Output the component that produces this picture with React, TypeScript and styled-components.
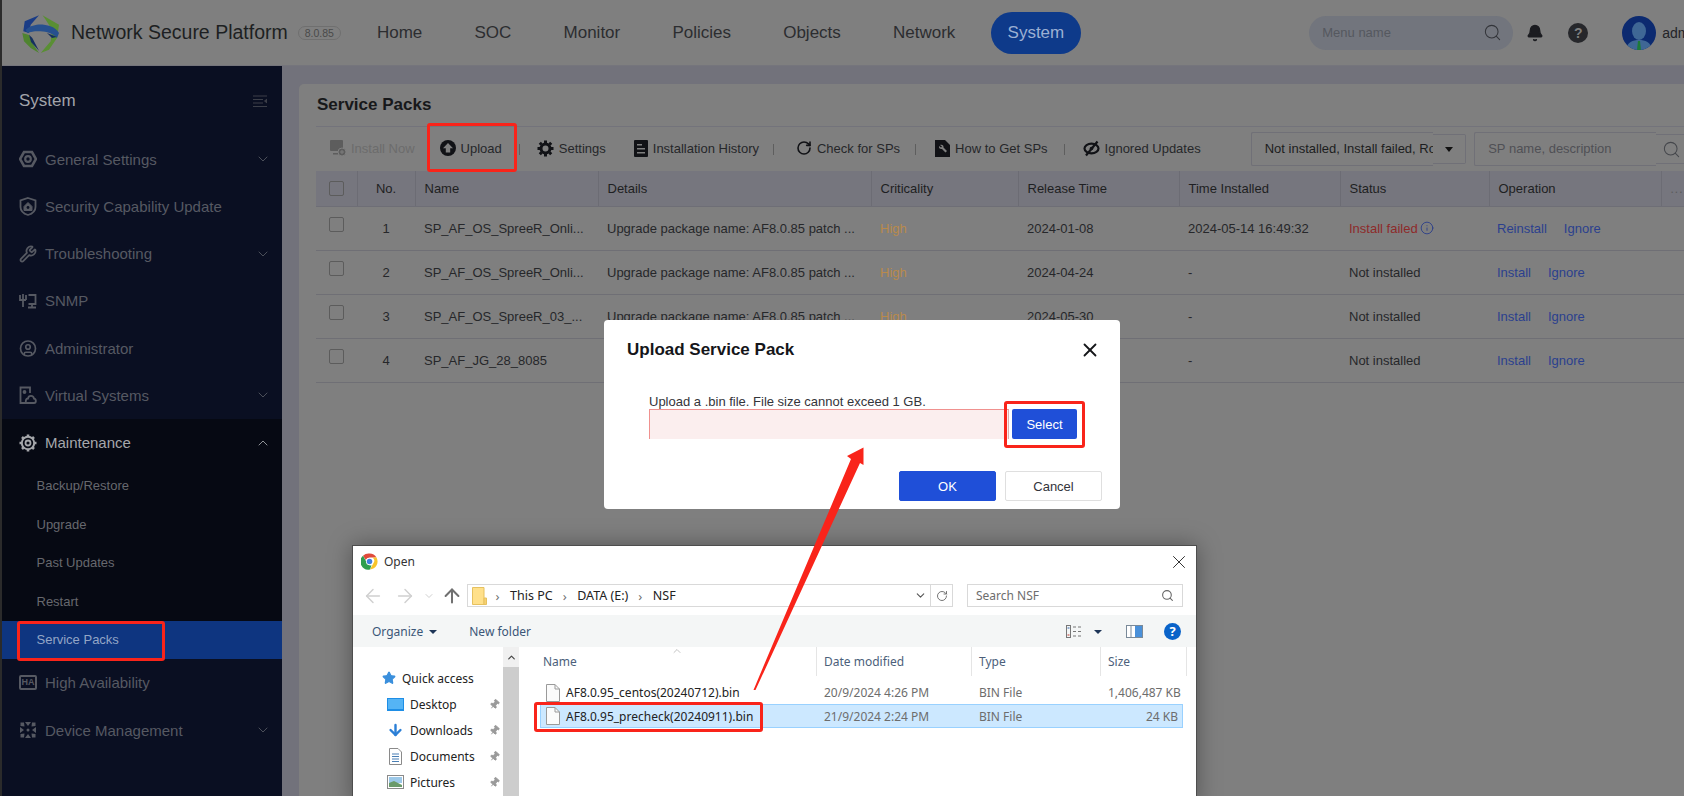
import React from "react";
import styled, { createGlobalStyle } from "styled-components";
import {
  ArrowDown,
  ArrowLeft,
  ArrowRight,
  ArrowUp,
  Bell,
  ChevronDown,
  ChevronUp,
  Info,
  Pin,
  RotateCw,
  Search,
  Star,
  UserCircle,
  Wrench,
  X,
} from "lucide-react";

const GlobalStyle = createGlobalStyle`
  html, body { margin: 0; padding: 0; background: #7f7f7f; }
  body { font-family: "Liberation Sans", Arial, sans-serif; overflow: hidden; }
  * { box-sizing: border-box; }
`;

const Page = styled.div`
  position: relative;
  width: 1684px;
  height: 796px;
  overflow: hidden;
  padding-left: 2px;
  background: #2b2b2b;
  display: flex;
  flex-direction: column;
`;

const Header = styled.header`
  height: 66px;
  flex: none;
  background: #7f7f7f;
  display: flex;
  align-items: center;
  padding-left: 19px;
  border-bottom: 1px solid #75757c;
`;

const Brand = styled.span`
  margin-left: 10px;
  font-size: 19.5px;
  color: #1d1f22;
  white-space: nowrap;
`;

const Version = styled.span`
  margin-left: 10px;
  height: 14px;
  padding: 0 6px;
  border: 1px solid #6f6f6f;
  border-radius: 7px;
  font-size: 10.5px;
  line-height: 12px;
  color: #4a4a4a;
`;

const Nav = styled.nav`
  margin-left: 19px;
  display: flex;
  gap: 18.2px;
`;

const NavItem = styled.a<{ $active?: boolean }>`
  height: 42px;
  padding: 0 17px;
  border-radius: 21px;
  font-size: 17px;
  line-height: 42px;
  background: ${(p) => (p.$active ? "#0e3a8a" : "transparent")};
  color: ${(p) => (p.$active ? "#9cb0d3" : "#2c2d30")};
`;

const HeaderRight = styled.div`
  margin-left: 228px;
  display: flex;
  align-items: center;
`;

const MenuSearch = styled.div`
  width: 204px;
  height: 34px;
  border-radius: 17px;
  padding: 0 11px 0 13px;
  background: #72757d;
  display: flex;
  align-items: center;
  justify-content: space-between;
  font-size: 13px;
  color: #55585f;
`;

const HeadIcon = styled.span<{ $gap: number }>`
  margin-left: ${(p) => p.$gap}px;
  display: flex;
  color: #1b1c20;
`;

const HelpDot = styled.span`
  margin-left: 24px;
  width: 20px;
  height: 20px;
  border-radius: 50%;
  background: #26272b;
  color: #7f7f7f;
  font-size: 14px;
  font-weight: 700;
  line-height: 20px;
  text-align: center;
`;

const UserName = styled.span`
  margin-left: 6px;
  font-size: 14px;
  color: #232428;
`;

const Body = styled.div`
  flex: 1;
  min-height: 0;
  display: flex;
`;

const Sidebar = styled.aside`
  width: 280px;
  flex: none;
  background: #0a0f22;
  display: flex;
  flex-direction: column;
`;

const SideTitle = styled.div`
  height: 69.5px;
  flex: none;
  padding: 0 15px 0 17px;
  display: flex;
  align-items: center;
  justify-content: space-between;
  font-size: 17px;
  color: #a2a4ab;
`;

const MenuRow = styled.div<{ $open?: boolean }>`
  height: 47.25px;
  flex: none;
  padding: 0 11px 0 17px;
  display: flex;
  align-items: center;
  font-size: 15px;
  color: ${(p) => (p.$open ? "#a5a7ab" : "#565962")};
`;

const MenuIcon = styled.span`
  width: 18px;
  height: 18px;
  flex: none;
  margin-right: 8px;
  display: flex;
  align-items: center;
  justify-content: center;
`;

const HaBadge = styled.span`
  width: 18px;
  height: 15px;
  border: 2px solid currentColor;
  border-radius: 2px;
  font-size: 9px;
  font-weight: 700;
  line-height: 11px;
  text-align: center;
`;

const MenuLabel = styled.span`
  flex: 1;
  white-space: nowrap;
`;

const Group = styled.div`
  background: #060913;
  flex: none;
`;

const SubRow = styled.div<{ $active?: boolean }>`
  height: 38.6px;
  padding-left: 34.5px;
  display: flex;
  align-items: center;
  font-size: 13px;
  background: ${(p) => (p.$active ? "#0e3580" : "transparent")};
  color: ${(p) => (p.$active ? "#93a5c6" : "#66686e")};
`;

const Main = styled.main`
  flex: 1;
  min-width: 0;
  background: #72727b;
  padding: 18px 0 0 17px;
  overflow: hidden;
`;

const Card = styled.section`
  width: 1420px;
  height: 100%;
  background: #7f7f7f;
  border-radius: 5px 0 0 0;
  padding: 0 17px;
`;

const CardTitle = styled.h2`
  margin: 0;
  height: 43px;
  padding: 1px 0 0 1px;
  font-size: 17px;
  line-height: 40px;
  font-weight: 700;
  color: #17181a;
  border-bottom: 1px solid #73737b;
`;

const Toolbar = styled.div`
  height: 44px;
  padding-left: 14px;
  display: flex;
  align-items: center;
  font-size: 13px;
  color: #26272a;
  & > * {
    flex: none;
  }
`;

const ToolItem = styled.span<{ $after?: number; $muted?: boolean }>`
  display: flex;
  align-items: center;
  gap: 5px;
  white-space: nowrap;
  margin-bottom: 2px;
  margin-right: ${(p) => p.$after ?? 18}px;
  color: ${(p) => (p.$muted ? "#6c6c6c" : "#26272a")};
`;

const ToolSep = styled.span<{ $after: number }>`
  width: 1px;
  height: 11px;
  margin-right: ${(p) => p.$after}px;
  background: #5e5e5e;
`;

const FilterWrap = styled.div`
  margin-left: 50px;
  display: flex;
  align-items: center;
`;

const FilterText = styled.div`
  width: 182px;
  height: 34px;
  padding-left: 13px;
  border: 1px solid #707077;
  border-right: 0;
  border-radius: 2px 0 0 2px;
  font-size: 13px;
  line-height: 32px;
  color: #1c1d20;
  white-space: nowrap;
  overflow: hidden;
`;

const FilterCaret = styled.div`
  width: 33px;
  height: 30px;
  border: 1px solid #707077;
  border-left: 0;
  border-radius: 0 2px 2px 0;
  display: flex;
  align-items: center;
  justify-content: center;
  &::after {
    content: "";
    border: 4px solid transparent;
    border-top: 5px solid #111;
    margin-top: 4px;
  }
`;

const SpSearch = styled.div`
  margin-left: 8.5px;
  display: flex;
  align-items: center;
`;

const SpInput = styled.div`
  width: 182px;
  height: 34px;
  padding-left: 13px;
  border: 1px solid #707077;
  border-right: 0;
  border-radius: 2px 0 0 2px;
  font-size: 13px;
  line-height: 32px;
  color: #4f5055;
`;

const SpIcon = styled.div`
  width: 60px;
  height: 30px;
  padding-left: 6px;
  border-top: 1px solid #707077;
  border-bottom: 1px solid #707077;
  display: flex;
  align-items: center;
  color: #45474c;
`;

const Table = styled.table`
  width: 1368px;
  table-layout: fixed;
  border-collapse: collapse;
  font-size: 13px;
  color: #26272a;
`;

const HeadCell = styled.th<{ $center?: boolean }>`
  height: 35px;
  padding: 0 9px;
  background: #76767e;
  border-right: 1px solid #6c6c74;
  border-bottom: 1px solid #6e6e76;
  font-weight: 400;
  text-align: ${(p) => (p.$center ? "center" : "left")};
  color: #1e1f22;
`;

const Cell = styled.td<{ $center?: boolean; $tone?: string }>`
  height: 44px;
  padding: 0 9px;
  border-bottom: 1px solid #6f6f75;
  text-align: ${(p) => (p.$center ? "center" : "left")};
  color: ${(p) => p.$tone ?? "#26272a"};
  white-space: nowrap;
  overflow: hidden;
`;

const Check = styled.span<{ $row?: boolean }>`
  display: block;
  width: 15px;
  height: 15px;
  margin: ${(p) => (p.$row ? "-7px 0 0 4px" : "0 0 0 4px")};
  border: 1px solid #5c5c5c;
  border-radius: 2px;
`;

const LinkText = styled.a`
  color: #2b3f8e;
  margin-right: 17px;
  &:first-child {
    margin-left: -1px;
  }
`;

const FailIcon = styled.span`
  margin-left: 2px;
  color: #24398a;
  vertical-align: -2px;
  display: inline-flex;
`;

const MoreDots = styled.span`
  letter-spacing: 1px;
  color: #5a5a5a;
  font-size: 12px;
`;

const Modal = styled.div`
  position: absolute;
  left: 604px;
  top: 320px;
  width: 516px;
  height: 189px;
  padding: 0 23px;
  background: #fff;
  border-radius: 4px;
`;

const ModalHead = styled.div`
  height: 53px;
  padding-top: 6px;
  display: flex;
  align-items: center;
  justify-content: space-between;
  font-size: 17px;
  font-weight: 700;
  color: #15161a;
`;

const CloseBtn = styled.span`
  display: flex;
  margin-right: -4px;
  color: #15161a;
`;

const ModalBody = styled.div`
  margin: 21px 0 0 22px;
  font-size: 13px;
  color: #34353a;
`;

const HintLine = styled.div`
  line-height: 15px;
  height: 15px;
`;

const UploadRow = styled.div`
  display: flex;
  margin-top: 0;
`;

const UploadField = styled.div`
  width: 360px;
  height: 30px;
  background: #fbeeee;
  border-top: 1px solid #f0918f;
  border-left: 1px solid #f0918f;
  border-right: 1px solid #d9b0ae;
`;

const SmallBlue = styled.button`
  margin-left: 3px;
  width: 65px;
  height: 30px;
  border: 0;
  border-radius: 2px;
  background: #1f4fd8;
  color: #fff;
  font: 13px "Liberation Sans", Arial, sans-serif;
`;

const ModalFoot = styled.div`
  margin-top: 32px;
  display: flex;
  justify-content: flex-end;
  gap: 9px;
  margin-right: -5px;
`;

const FootBtn = styled.button<{ $primary?: boolean }>`
  width: 97px;
  height: 30px;
  border-radius: 2px;
  border: 1px solid ${(p) => (p.$primary ? "#1f4fd8" : "#dfdfdf")};
  background: ${(p) => (p.$primary ? "#1f4fd8" : "#fff")};
  color: ${(p) => (p.$primary ? "#fff" : "#33343a")};
  font: 13px "Liberation Sans", Arial, sans-serif;
`;

const Explorer = styled.div`
  position: absolute;
  left: 352px;
  top: 545px;
  width: 845px;
  height: 260px;
  background: #fff;
  border: 1px solid #4d4d4d;
  box-shadow: 0 0 22px rgba(0, 0, 0, 0.35);
  font-family: "Noto Sans", "Open Sans", sans-serif;
  font-size: 12px;
  color: #222;
`;

const ExTitle = styled.div`
  height: 31px;
  padding: 0 6px 0 8px;
  display: flex;
  align-items: center;
  gap: 6px;
`;

const ExTitleText = styled.span`
  flex: 1;
  color: #333;
`;

const ExAddressRow = styled.div`
  height: 38px;
  padding: 7px 13px 0 4px;
  display: flex;
  align-items: flex-start;
`;

const ExNavBtn = styled.span<{ $w: number; $tone: string }>`
  width: ${(p) => p.$w}px;
  height: 23px;
  display: flex;
  align-items: center;
  justify-content: center;
  color: ${(p) => p.$tone};
`;

const AddressBox = styled.div`
  width: 486px;
  height: 23px;
  border: 1px solid #d9d9d9;
  display: flex;
  align-items: center;
  padding-left: 4px;
`;

const Crumb = styled.span`
  margin-left: 10.5px;
  font-size: 12.5px;
  color: #222;
`;

const CrumbGt = styled.span`
  margin-left: 10px;
  color: #707070;
  font-size: 13px;
  display: flex;
  svg + & {
    margin-left: 8.5px;
  }
`;

const AddressTail = styled.div`
  margin-left: auto;
  display: flex;
  align-items: center;
  height: 100%;
`;

const RefreshBtn = styled.span`
  width: 22px;
  height: 100%;
  margin-left: 3px;
  border-left: 1px solid #d9d9d9;
  display: flex;
  align-items: center;
  justify-content: center;
  color: #666;
`;

const ExSearch = styled.div`
  margin-left: 14px;
  width: 216px;
  height: 23px;
  border: 1px solid #d9d9d9;
  padding: 0 8px;
  display: flex;
  align-items: center;
  justify-content: space-between;
  color: #6d6d6d;
`;

const ExToolbar = styled.div`
  height: 32px;
  padding: 0 15px 0 19px;
  background: #f4f6f6;
  display: flex;
  align-items: center;
  color: #3b5678;
`;

const ExToolText = styled.span`
  white-space: nowrap;
`;

const DownCaret = styled.span<{ $before?: number; $after?: number }>`
  margin: 2px ${(p) => p.$after ?? 32}px 0 ${(p) => p.$before ?? 6}px;
  border: 4px solid transparent;
  border-top: 4px solid #1d3557;
  border-bottom: 0;
`;

const ExSpacer = styled.span`
  flex: 1;
`;

const ExToolIcon = styled.span<{ $after?: number }>`
  display: flex;
  margin-right: ${(p) => p.$after ?? 0}px;
`;

const ExHelp = styled.span`
  width: 17px;
  height: 17px;
  border-radius: 50%;
  background: #0a63c9;
  color: #fff;
  font-size: 13px;
  font-weight: 700;
  line-height: 17px;
  text-align: center;
`;

const ExPanes = styled.div`
  display: flex;
  height: 160px;
`;

const ExTree = styled.div`
  width: 150px;
  flex: none;
  padding: 18px 0 0 29px;
`;

const TreeRow = styled.div<{ $top?: boolean }>`
  height: 26px;
  display: flex;
  align-items: center;
  margin-left: ${(p) => (p.$top ? "0" : "5px")};
  gap: 6px;
`;

const TreeIcon = styled.span`
  width: 17px;
  height: 17px;
  flex: none;
  display: flex;
  align-items: center;
  justify-content: center;
`;

const TreeLabel = styled.span`
  flex: 1;
`;

const TreePin = styled.span`
  display: flex;
  margin-right: 3px;
  color: #9a9a9a;
  transform: rotate(40deg);
`;

const ExScroll = styled.div`
  width: 16px;
  flex: none;
  background: #f0f0f0;
  padding-top: 5px;
  display: flex;
  flex-direction: column;
  align-items: center;
  color: #444;
`;

const ExThumb = styled.div`
  margin-top: 4px;
  width: 16px;
  flex: 1;
  background: #cdcdcd;
`;

const ExList = styled.div`
  flex: 1;
  min-width: 0;
  position: relative;
  padding-left: 21px;
`;

const SortMark = styled.span`
  position: absolute;
  left: 152px;
  top: -2px;
  display: flex;
  color: #9a9a9a;
`;

const ExHeadRow = styled.div`
  height: 28px;
  display: grid;
  grid-template-columns: 277px 155px 129px 86px;
  color: #4c5f7b;
`;

const ExHeadCell = styled.span`
  padding-left: 7px;
  line-height: 29px;
  border-right: 1px solid #e5e5e5;
  &:first-child {
    padding-left: 3px;
  }
`;

const ExFileRow = styled.div<{ $selected?: boolean }>`
  margin-top: ${(p) => (p.$selected ? "0" : "6px")};
  width: 643px;
  height: ${(p) => (p.$selected ? "24px" : "23px")};
  display: grid;
  grid-template-columns: 276px 155px 129px 1fr;
  align-items: center;
  border: 1px solid ${(p) => (p.$selected ? "#99d1ff" : "transparent")};
  background: ${(p) => (p.$selected ? "#cce8ff" : "transparent")};
`;

const FileName = styled.span`
  display: flex;
  align-items: center;
  gap: 6px;
  padding-left: 5px;
  color: #222;
  white-space: nowrap;
`;

const FileMeta = styled.span<{ $right?: boolean }>`
  padding-left: 7px;
  padding-right: 4px;
  color: #6d6d6d;
  text-align: ${(p) => (p.$right ? "right" : "left")};
  white-space: nowrap;
`;

const RedBox = styled.div<{ $x: number; $y: number; $w: number; $h: number }>`
  position: absolute;
  left: ${(p) => p.$x}px;
  top: ${(p) => p.$y}px;
  width: ${(p) => p.$w}px;
  height: ${(p) => p.$h}px;
  border: 3px solid #f9241a;
  border-radius: 3px;
  pointer-events: none;
`;

const ArrowLayer = styled.svg`
  position: absolute;
  left: 0;
  top: 0;
  pointer-events: none;
`;

const Logo = () => (
  <svg width="40" height="40" viewBox="0 0 40 40" style={{ flex: "none" }}>
    <path d="M21.500 2.300 38 11.700 36 25 28 36.700 19.700 40 29.700 28.300 31 16.700 24.700 6.700Z" fill="#5a8f34" />
    <path d="M1.300 20 3 28.300 9.700 35 18 40 11.300 30 8 22Z" fill="#4f8430" />
    <path d="M18 2.300 3.700 8.300 2.300 18.300 8 20 9.700 11.700Z" fill="#1a3c86" />
    <path d="M4.700 16.700C10 12 17 11 23 11.700 30 12.500 35 15 38 20L36 25C32 21 28 19 22 18.500 17 18 11 18 6.300 20Z" fill="#27508e" />
    <path d="M8 21.700 11.300 25 18 37.700 10 29Z" fill="#14305f" />
    <path d="M26 20 36 24 31 25Z" fill="#14305f" />
  </svg>
);

const Avatar = () => (
  <svg width="34" height="34" viewBox="0 0 34 34">
    <defs>
      <clipPath id="av">
        <circle cx="17" cy="17" r="17" />
      </clipPath>
    </defs>
    <g clipPath="url(#av)">
      <rect width="34" height="34" fill="#0c2a70" />
      <path d="M4 34C5 26 11 24 17 24 23 24 29 26 30 34Z" fill="#3f6795" />
      <ellipse cx="17" cy="15" rx="7" ry="9" fill="#3f6795" />
      <path d="M16 25H18L19 34H15Z" fill="#1d7a3a" />
    </g>
  </svg>
);

const HexIcon = () => (
  <svg width="18" height="18" viewBox="0 0 18 18" fill="none" stroke="currentColor" strokeWidth="2.6">
    <path d="M5 2H13L17 9 13 16H5L1 9Z" />
    <circle cx="9" cy="9" r="2.800" strokeWidth="2.200" />
  </svg>
);

const ShieldIcon = () => (
  <svg width="18" height="19" viewBox="0 0 18 19" fill="none" stroke="currentColor" strokeWidth="1.800">
    <path d="M9 1 16.500 3.500V10C16.500 14 13 16.800 9 18 5 16.800 1.500 14 1.500 10V3.500Z" />
    <path d="M9 5.500 13 9.500V13.500H5V9.500Z" fill="currentColor" strokeWidth="1" />
    <circle cx="9" cy="10.500" r="1.400" fill="#0a0f22" stroke="none" />
  </svg>
);

const SnmpIcon = () => (
  <svg width="18" height="16" viewBox="0 0 18 16" fill="none" stroke="currentColor" strokeWidth="1.800">
    <path d="M1 2V7H7M4 1V14M7 2V7" />
    <path d="M9.500 2H16.500V11H9.500M13 11V14.500M9 14.500H17" />
  </svg>
);

const VirtualIcon = () => (
  <svg width="18" height="18" viewBox="0 0 18 18" fill="none" stroke="currentColor" strokeWidth="1.800">
    <path d="M8 17H1.500V1.500H11V7" />
    <path d="M8 17H15C17.500 17 17.500 13 15 12.700 14.500 9 9.500 9 9 12.500 6.500 12.500 6 17 8 17Z" />
    <circle cx="5.500" cy="6" r="1" fill="currentColor" />
  </svg>
);

const GearIcon = () => (
  <svg width="18" height="18" viewBox="0 0 18 18" fill="none" stroke="currentColor">
    <circle cx="9" cy="9" r="6.200" strokeWidth="2" />
    <circle cx="9" cy="9" r="2.500" strokeWidth="1.800" />
    <path
      strokeWidth="2.600"
      d="M9 .500V3M9 15V17.500M.500 9H3M15 9H17.500M3 3 4.800 4.800M13.200 13.200 15 15M3 15 4.800 13.200M13.200 4.800 15 3"
    />
  </svg>
);

const DeviceIcon = () => (
  <svg width="18" height="18" viewBox="0 0 18 18" fill="currentColor">
    <path d="M6 1H12L9 5ZM6 17H12L9 13ZM1 6 5 9 1 12ZM17 6 13 9 17 12Z" />
    <path d="M1.500 1.500H5L5.500 5.500 1.500 5ZM16.500 1.500H13L12.500 5.500 16.500 5ZM1.500 16.500H5L5.500 12.500 1.500 13ZM16.500 16.500H13L12.500 12.500 16.500 13Z" />
    <circle cx="9" cy="9" r="1.500" />
  </svg>
);

const CollapseIcon = () => (
  <svg width="14" height="12" viewBox="0 0 14 12" fill="none" stroke="#3c3f49" strokeWidth="1">
    <path d="M0 1H14M0 4.500H10M0 8H10M0 11.500H14" />
    <path d="M14 4 11.500 6 14 8Z" fill="#3c3f49" />
  </svg>
);

const InstallIcon = () => (
  <svg width="16" height="16" viewBox="0 0 16 16">
    <rect x="0" y="0" width="13" height="11" rx="1" fill="#5d5d5d" />
    <rect x="3" y="13" width="5" height="1.500" fill="#5d5d5d" />
    <circle cx="12" cy="12" r="4" fill="#5d5d5d" stroke="#7f7f7f" />
    <path d="M12 10V14M10 12H14" stroke="#7f7f7f" strokeWidth="1" />
  </svg>
);

const UploadIcon = () => (
  <svg width="16" height="16" viewBox="0 0 16 16">
    <circle cx="8" cy="8" r="8" fill="#111216" />
    <path d="M8 3 13 8.200H10.200V12.500H5.800V8.200H3Z" fill="#7f7f7f" />
  </svg>
);

const CogIcon = () => (
  <svg width="17" height="17" viewBox="0 0 17 17" fill="none" stroke="#111216">
    <circle cx="8.500" cy="8.500" r="4.500" strokeWidth="3" />
    <path
      strokeWidth="3"
      d="M8.500 .5V3M8.500 14V16.500M.5 8.500H3M14 8.500H16.500M2.800 2.800 4.500 4.500M12.500 12.500 14.200 14.200M2.800 14.200 4.500 12.500M12.500 4.500 14.200 2.800"
    />
  </svg>
);

const HistoryIcon = () => (
  <svg width="14" height="17" viewBox="0 0 14 17">
    <rect width="14" height="17" rx="1" fill="#111216" />
    <path d="M3 4H8V5.500H3ZM3 8H11V9.500H3ZM3 12H11V13.500H3Z" fill="#7f7f7f" />
  </svg>
);

const GuideIcon = () => (
  <svg width="15" height="17" viewBox="0 0 15 17">
    <path d="M0 0H10L15 5V17H0Z" fill="#111216" />
    <path d="M5 5C7 4 9 5.500 8.500 7.500L12 11 10.500 12.500 7 9C5 9.500 3.500 8 4 6L6 7.500 7 6.500Z" fill="#7f7f7f" />
  </svg>
);

const IgnoreIcon = () => (
  <svg width="17" height="17" viewBox="0 0 17 17" fill="none" stroke="#111216">
    <ellipse cx="8.500" cy="8.500" rx="7" ry="4.800" strokeWidth="2.200" />
    <circle cx="8.500" cy="8.500" r="1.800" fill="#111216" stroke="none" />
    <path d="M14.500 1.500 3 15.500" strokeWidth="2.200" />
  </svg>
);

const ChromeIcon = () => (
  <svg width="17" height="17" viewBox="0 0 34 34">
    <path d="M17 1A16 16 0 0 1 31 9H17A8 8 0 0 0 9.500 14L4 5.500A16 16 0 0 1 17 1Z" fill="#e04a3b" />
    <path d="M31 9A16 16 0 0 1 18 33L25 20A8 8 0 0 0 23 9Z" fill="#f8c52c" />
    <path d="M4 5.500 11 18A8 8 0 0 0 21 24.500L18 33A16 16 0 0 1 4 5.500Z" fill="#2f9e4f" />
    <circle cx="17" cy="17" r="7" fill="#fff" />
    <circle cx="17" cy="17" r="5.500" fill="#3f7fe0" />
  </svg>
);

const FolderIcon = () => (
  <svg width="15" height="18" viewBox="0 0 15 18">
    <path d="M.5.5H12V17.500H.5Z" fill="#ffe08a" stroke="#e6c15f" />
    <path d="M12 11H14.500V17.500H12Z" fill="#f7d070" stroke="#e6c15f" />
  </svg>
);

const ViewIcon = () => (
  <svg width="18" height="13" viewBox="0 0 18 13" fill="none" stroke="#777">
    <rect x=".5" y=".5" width="4" height="12" />
    <path d="M7 2H10M12 2H15M7 6.500H10M12 6.500H15M7 11H10M12 11H15" />
    <path d="M1.500 3H3.500" stroke="#3264a8" />
    <path d="M1.500 10H3.500" stroke="#c0392b" />
  </svg>
);

const PaneIcon = () => (
  <svg width="17" height="13" viewBox="0 0 17 13">
    <rect x=".5" y=".5" width="16" height="12" fill="#fff" stroke="#7a8a99" />
    <rect x="9" y="1" width="7" height="11" fill="#4a90d9" />
    <path d="M5 1V12" stroke="#7a8a99" />
  </svg>
);

const FileIcon = () => (
  <svg width="14" height="18" viewBox="0 0 14 18" style={{ flex: "none" }}>
    <path d="M.5.5H9L13.500 5V17.500H.5Z" fill="#fbfbfb" stroke="#9a9a9a" />
    <path d="M9 .5V5H13.500" fill="none" stroke="#9a9a9a" />
  </svg>
);

const DesktopIcon = () => (
  <svg width="17" height="13" viewBox="0 0 17 13">
    <rect width="17" height="13" fill="#1e8ee6" />
    <rect x="1" y="1" width="15" height="10" fill="#55b4f5" />
  </svg>
);

const DocIcon = () => (
  <svg width="13" height="17" viewBox="0 0 13 17">
    <path d="M.5.5H9L12.500 4V16.500H.5Z" fill="#fff" stroke="#8a8a8a" />
    <path d="M3 6H10M3 8.500H10M3 11H10M3 13.500H10" stroke="#4a7fb5" />
  </svg>
);

const PictureIcon = () => (
  <svg width="17" height="14" viewBox="0 0 17 14">
    <rect x=".5" y=".5" width="16" height="13" fill="#fff" stroke="#8a8a8a" />
    <rect x="2" y="2" width="13" height="6" fill="#9cc8e8" />
    <path d="M2 12V8L7 6 15 10V12Z" fill="#6a9a6a" />
  </svg>
);

const menuTop = [
  { label: "General Settings", icon: <HexIcon />, more: true },
  { label: "Security Capability Update", icon: <ShieldIcon /> },
  { label: "Troubleshooting", icon: <Wrench size={18} strokeWidth={2.4} />, more: true },
  { label: "SNMP", icon: <SnmpIcon /> },
  { label: "Administrator", icon: <UserCircle size={19} strokeWidth={2.2} /> },
  { label: "Virtual Systems", icon: <VirtualIcon />, more: true },
];

const subMenu = ["Backup/Restore", "Upgrade", "Past Updates", "Restart", "Service Packs"];

const colWidths = [41, 58, 183, 273, 147, 161, 161, 149, 172, 23];

const detailText = "Upgrade package name: AF8.0.85 patch ...";

// row 4 sits behind the dialog from Details to Release Time
const packs = [
  { no: 1, name: "SP_AF_OS_SpreeR_Onli...", details: detailText, level: "High", date: "2024-01-08", installed: "2024-05-14 16:49:32", failed: true },
  { no: 2, name: "SP_AF_OS_SpreeR_Onli...", details: detailText, level: "High", date: "2024-04-24", installed: "-" },
  { no: 3, name: "SP_AF_OS_SpreeR_03_...", details: detailText, level: "High", date: "2024-05-30", installed: "-" },
  { no: 4, name: "SP_AF_JG_28_8085", details: "", level: "", date: "", installed: "-" },
];

const treeItems = [
  { label: "Desktop", icon: <DesktopIcon /> },
  { label: "Downloads", icon: <ArrowDown size={18} strokeWidth={3.4} color="#2b7fd6" /> },
  { label: "Documents", icon: <DocIcon /> },
  { label: "Pictures", icon: <PictureIcon /> },
];

export default function App() {
  return (
    <>
      <GlobalStyle />
      <Page>
        <Header>
          <Logo />
          <Brand>Network Secure Platform</Brand>
          <Version>8.0.85</Version>
          <Nav>
            <NavItem>Home</NavItem>
            <NavItem>SOC</NavItem>
            <NavItem>Monitor</NavItem>
            <NavItem>Policies</NavItem>
            <NavItem>Objects</NavItem>
            <NavItem>Network</NavItem>
            <NavItem $active>System</NavItem>
          </Nav>
          <HeaderRight>
            <MenuSearch>
              Menu name
              <Search size={19} strokeWidth={1.3} color="#33353a" />
            </MenuSearch>
            <HeadIcon $gap={13}>
              <Bell size={18} fill="currentColor" />
            </HeadIcon>
            <HelpDot>?</HelpDot>
            <HeadIcon $gap={34}>
              <Avatar />
            </HeadIcon>
            <UserName>admin</UserName>
          </HeaderRight>
        </Header>

        <Body>
          <Sidebar>
            <SideTitle>
              System
              <CollapseIcon />
            </SideTitle>
            {menuTop.map((item) => (
              <MenuRow key={item.label}>
                <MenuIcon>{item.icon}</MenuIcon>
                <MenuLabel>{item.label}</MenuLabel>
                {item.more && <ChevronDown size={16} strokeWidth={1.3} />}
              </MenuRow>
            ))}
            <Group>
              <MenuRow $open>
                <MenuIcon>
                  <GearIcon />
                </MenuIcon>
                <MenuLabel>Maintenance</MenuLabel>
                <ChevronUp size={16} strokeWidth={1.3} />
              </MenuRow>
              {subMenu.map((label) => (
                <SubRow key={label} $active={label === "Service Packs"}>
                  {label}
                </SubRow>
              ))}
            </Group>
            <MenuRow>
              <MenuIcon>
                <HaBadge>HA</HaBadge>
              </MenuIcon>
              <MenuLabel>High Availability</MenuLabel>
            </MenuRow>
            <MenuRow>
              <MenuIcon>
                <DeviceIcon />
              </MenuIcon>
              <MenuLabel>Device Management</MenuLabel>
              <ChevronDown size={16} strokeWidth={1.3} />
            </MenuRow>
          </Sidebar>

          <Main>
            <Card>
              <CardTitle>Service Packs</CardTitle>
              <Toolbar>
                <ToolItem $muted $after={25}>
                  <InstallIcon />
                  Install Now
                </ToolItem>
                <ToolItem $after={17}>
                  <UploadIcon />
                  Upload
                </ToolItem>
                <ToolSep $after={17} />
                <ToolItem $after={28}>
                  <CogIcon />
                  Settings
                </ToolItem>
                <ToolItem $after={14.5}>
                  <HistoryIcon />
                  Installation History
                </ToolItem>
                <ToolSep $after={21.5} />
                <ToolItem $after={15}>
                  <RotateCw size={16} strokeWidth={2.4} color="#111216" />
                  Check for SPs
                </ToolItem>
                <ToolSep $after={19} />
                <ToolItem $after={16}>
                  <GuideIcon />
                  How to Get SPs
                </ToolItem>
                <ToolSep $after={18} />
                <ToolItem $after={0}>
                  <IgnoreIcon />
                  Ignored Updates
                </ToolItem>
                <FilterWrap>
                  <FilterText>Not installed, Install failed, Ro</FilterText>
                  <FilterCaret />
                </FilterWrap>
                <SpSearch>
                  <SpInput>SP name, description</SpInput>
                  <SpIcon>
                    <Search size={19} strokeWidth={1.3} />
                  </SpIcon>
                </SpSearch>
              </Toolbar>
              <Table>
                <colgroup>
                  {colWidths.map((w, i) => (
                    <col key={i} width={w} />
                  ))}
                </colgroup>
                <thead>
                  <tr>
                    <HeadCell>
                      <Check />
                    </HeadCell>
                    <HeadCell $center>No.</HeadCell>
                    <HeadCell>Name</HeadCell>
                    <HeadCell>Details</HeadCell>
                    <HeadCell>Criticality</HeadCell>
                    <HeadCell>Release Time</HeadCell>
                    <HeadCell>Time Installed</HeadCell>
                    <HeadCell>Status</HeadCell>
                    <HeadCell>Operation</HeadCell>
                    <HeadCell>
                      <MoreDots>...</MoreDots>
                    </HeadCell>
                  </tr>
                </thead>
                <tbody>
                  {packs.map((p) => (
                    <tr key={p.no}>
                      <Cell>
                        <Check $row />
                      </Cell>
                      <Cell $center>{p.no}</Cell>
                      <Cell>{p.name}</Cell>
                      <Cell>{p.details}</Cell>
                      <Cell $tone="#b98a4c">{p.level}</Cell>
                      <Cell>{p.date}</Cell>
                      <Cell>{p.installed}</Cell>
                      <Cell $tone={p.failed ? "#8e2a2a" : undefined}>
                        {p.failed ? "Install failed" : "Not installed"}
                        {p.failed && (
                          <FailIcon>
                            <Info size={14} strokeWidth={1.4} />
                          </FailIcon>
                        )}
                      </Cell>
                      <Cell>
                        <LinkText>{p.failed ? "Reinstall" : "Install"}</LinkText>
                        <LinkText>Ignore</LinkText>
                      </Cell>
                      <Cell />
                    </tr>
                  ))}
                </tbody>
              </Table>
            </Card>
          </Main>
        </Body>

        <Modal>
          <ModalHead>
            Upload Service Pack
            <CloseBtn>
              <X size={22} strokeWidth={2} />
            </CloseBtn>
          </ModalHead>
          <ModalBody>
            <HintLine>Upload a .bin file. File size cannot exceed 1 GB.</HintLine>
            <UploadRow>
              <UploadField />
              <SmallBlue>Select</SmallBlue>
            </UploadRow>
            <ModalFoot>
              <FootBtn $primary>OK</FootBtn>
              <FootBtn>Cancel</FootBtn>
            </ModalFoot>
          </ModalBody>
        </Modal>

        <Explorer>
          <ExTitle>
            <ChromeIcon />
            <ExTitleText>Open</ExTitleText>
            <X size={22} strokeWidth={1} color="#222" />
          </ExTitle>
          <ExAddressRow>
            <ExNavBtn $w={32} $tone="#d0d0d0">
              <ArrowLeft size={22} strokeWidth={1.6} />
            </ExNavBtn>
            <ExNavBtn $w={32} $tone="#d0d0d0">
              <ArrowRight size={22} strokeWidth={1.6} />
            </ExNavBtn>
            <ExNavBtn $w={16} $tone="#d0d0d0">
              <ChevronDown size={12} strokeWidth={2} />
            </ExNavBtn>
            <ExNavBtn $w={30} $tone="#707070">
              <ArrowUp size={22} strokeWidth={2.2} />
            </ExNavBtn>
            <AddressBox>
              <FolderIcon />
              <CrumbGt>›</CrumbGt>
              <Crumb>This PC</Crumb>
              <CrumbGt>›</CrumbGt>
              <Crumb>DATA (E:)</Crumb>
              <CrumbGt>›</CrumbGt>
              <Crumb>NSF</Crumb>
              <AddressTail>
                <ChevronDown size={13} strokeWidth={2} color="#555" />
                <RefreshBtn>
                  <RotateCw size={12} strokeWidth={1.8} />
                </RefreshBtn>
              </AddressTail>
            </AddressBox>
            <ExSearch>
              Search NSF
              <Search size={13} strokeWidth={2} color="#666" />
            </ExSearch>
          </ExAddressRow>
          <ExToolbar>
            <ExToolText>Organize</ExToolText>
            <DownCaret />
            <ExToolText>New folder</ExToolText>
            <ExSpacer />
            <ExToolIcon>
              <ViewIcon />
            </ExToolIcon>
            <DownCaret $before={10} $after={24} />
            <ExToolIcon $after={21}>
              <PaneIcon />
            </ExToolIcon>
            <ExHelp>?</ExHelp>
          </ExToolbar>
          <ExPanes>
            <ExTree>
              <TreeRow $top>
                <Star size={14} fill="#3a8fdc" color="#3a8fdc" />
                <TreeLabel>Quick access</TreeLabel>
              </TreeRow>
              {treeItems.map((t) => (
                <TreeRow key={t.label}>
                  <TreeIcon>{t.icon}</TreeIcon>
                  <TreeLabel>{t.label}</TreeLabel>
                  <TreePin>
                    <Pin size={11} fill="currentColor" />
                  </TreePin>
                </TreeRow>
              ))}
            </ExTree>
            <ExScroll>
              <ChevronUp size={11} strokeWidth={2.6} />
              <ExThumb />
            </ExScroll>
            <ExList>
              <SortMark>
                <ChevronUp size={12} strokeWidth={1.2} />
              </SortMark>
              <ExHeadRow>
                <ExHeadCell>Name</ExHeadCell>
                <ExHeadCell>Date modified</ExHeadCell>
                <ExHeadCell>Type</ExHeadCell>
                <ExHeadCell>Size</ExHeadCell>
              </ExHeadRow>
              <ExFileRow>
                <FileName>
                  <FileIcon />
                  AF8.0.95_centos(20240712).bin
                </FileName>
                <FileMeta>20/9/2024 4:26 PM</FileMeta>
                <FileMeta>BIN File</FileMeta>
                <FileMeta $right>1,406,487 KB</FileMeta>
              </ExFileRow>
              <ExFileRow $selected>
                <FileName>
                  <FileIcon />
                  AF8.0.95_precheck(20240911).bin
                </FileName>
                <FileMeta>21/9/2024 2:24 PM</FileMeta>
                <FileMeta>BIN File</FileMeta>
                <FileMeta $right>24 KB</FileMeta>
              </ExFileRow>
            </ExList>
          </ExPanes>
        </Explorer>

        <RedBox $x={427} $y={123} $w={90} $h={49} />
        <RedBox $x={17} $y={621} $w={148} $h={40} />
        <RedBox $x={1004} $y={401} $w={81} $h={47} />
        <RedBox $x={534} $y={702} $w={229} $h={30} />
        <ArrowLayer width="1684" height="796">
          <polygon points="753.500,690 851,459 847,456 863.500,447.500 863.500,465 860,463 755.500,690" fill="#f9241a" />
        </ArrowLayer>
      </Page>
    </>
  );
}
